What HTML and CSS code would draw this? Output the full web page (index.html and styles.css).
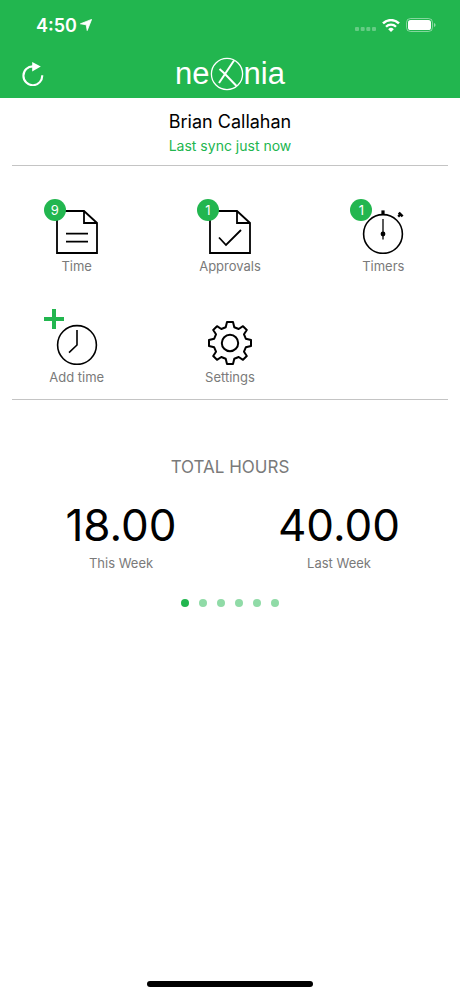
FILE: index.html
```html
<!DOCTYPE html>
<html lang="en">

<head>
    <meta charset="UTF-8">
    <meta name="viewport" content="width=device-width, initial-scale=1.0">
    <title>Nexonia</title>
    <link rel="stylesheet" href="styles.css">
</head>

<body>
    <header class="header">
        <div class="status-bar">
            <div class="status-left">
                <span class="clock">4:50</span>
                <svg class="location" viewBox="0 0 12 12" width="12" height="12">
                    <path d="M11.6 0.4 L7.2 11.6 L6.2 5.8 L0.4 4.8 Z" fill="#fff" stroke="#fff" stroke-width="0.8" stroke-linejoin="round" />
                </svg>
            </div>
            <div class="status-right">
                <svg viewBox="0 0 21 12" width="21" height="12" fill="#fff" opacity="0.3">
                    <rect x="0" y="8" width="4" height="4" rx="1" />
                    <rect x="5.7" y="8" width="4" height="4" rx="1" />
                    <rect x="11.3" y="8" width="4" height="4" rx="1" />
                    <rect x="17" y="8" width="4" height="4" rx="1" />
                </svg>
                <svg class="wifi" viewBox="0 0 18 13" width="18" height="13">
                    <path d="M1 4.4 A11.4 11.4 0 0 1 17 4.4" fill="none" stroke="#fff" stroke-width="2.5" />
                    <path d="M4 7.8 A7 7 0 0 1 14 7.8" fill="none" stroke="#fff" stroke-width="2.3" />
                    <path d="M9 13 L6.2 10.2 A4 4 0 0 1 11.8 10.2 Z" fill="#fff" />
                </svg>
                <svg class="battery" viewBox="0 0 30 14" width="30" height="14">
                    <rect x="0.5" y="0.5" width="26" height="13" rx="4" fill="none" stroke="#fff" stroke-opacity="0.45" />
                    <rect x="2" y="2" width="23" height="10" rx="2.6" fill="#fff" />
                    <path d="M28 5 Q29.6 5.6 29.6 7 Q29.6 8.4 28 9 Z" fill="#fff" fill-opacity="0.5" />
                </svg>
            </div>
        </div>

        <div class="nav-bar">
            <button class="refresh" type="button" aria-label="Refresh">
                <svg viewBox="0 0 22 24" width="22" height="24">
                    <path d="M11 4.4 A9.4 9.4 0 1 0 20.2 13.2" fill="none" stroke="#fff" stroke-width="2.1" />
                    <path d="M10.2 0 L18.8 4.4 L10.2 9.6 Z" fill="#fff" />
                </svg>
            </button>
            <div class="logo">
                <span>ne</span>
                <svg viewBox="0 0 34 34" width="34" height="34" fill="none" stroke="#fff">
                    <circle cx="17" cy="17" r="15.6" stroke-width="1.3" />
                    <path d="M9.5 12 L14.5 16.5 L26.5 29" stroke-width="2" />
                    <path d="M24 3.5 L9 26" stroke-width="2" />
                </svg>
                <span>nia</span>
            </div>
        </div>
    </header>

    <main class="content">
        <section class="user">
            <h1 class="user-name">Brian Callahan</h1>
            <p class="sync">Last sync just now</p>
        </section>

        <nav class="menu">
            <a class="tile" href="#">
                <span class="icon">
                    <svg viewBox="0 0 44 44" width="44" height="44" fill="none" stroke="#000" stroke-width="1.8">
                        <path d="M2 1 H29 L42 13 V43 H2 Z M29 1 V13 H42" />
                        <path d="M11 23.7 H33 M11 31.7 H33" />
                    </svg>
                    <span class="badge">9</span>
                </span>
                <span class="label">Time</span>
            </a>
            <a class="tile" href="#">
                <span class="icon">
                    <svg viewBox="0 0 44 44" width="44" height="44" fill="none" stroke="#000" stroke-width="1.8">
                        <path d="M2 1 H29 L42 13 V43 H2 Z M29 1 V13 H42" />
                        <path d="M11 27.5 L18 35 L33 20" />
                    </svg>
                    <span class="badge">1</span>
                </span>
                <span class="label">Approvals</span>
            </a>
            <a class="tile" href="#">
                <span class="icon">
                    <svg viewBox="0 0 44 44" width="44" height="44">
                        <circle cx="22" cy="24" r="19.4" fill="none" stroke="#000" stroke-width="1.6" />
                        <path d="M22 9 V29.5" stroke="#000" stroke-width="1.3" />
                        <circle cx="22" cy="24" r="2.4" />
                        <rect x="20.4" y="0.4" width="3.2" height="4" />
                        <path d="M37.8 2.6 L41.6 6.4" stroke="#000" stroke-width="2.6" />
                        <path d="M39.6 4.2 L37.2 6.6" stroke="#000" stroke-width="2.4" />
                    </svg>
                    <span class="badge">1</span>
                </span>
                <span class="label">Timers</span>
            </a>
            <a class="tile" href="#">
                <span class="icon">
                    <svg viewBox="0 0 44 44" width="44" height="44" fill="none" stroke="#000" stroke-width="1.6">
                        <circle cx="22" cy="24" r="19.4" />
                        <path d="M22 9 V24 L14 31.6" />
                    </svg>
                    <svg class="plus" viewBox="0 0 20 20" width="20" height="20">
                        <path d="M10 0 V20 M0 10 H20" stroke="#22b64f" stroke-width="4" />
                    </svg>
                </span>
                <span class="label">Add time</span>
            </a>
            <a class="tile" href="#">
                <span class="icon">
                    <svg viewBox="0 0 44 44" width="44" height="44" fill="none" stroke="#000" stroke-width="2">
                        <path stroke-linejoin="round" d="M19 1 H25 L26.3 6.2 L30.7 8 L35 5.2 L38.8 9 L36 13.3 L37.8 17.7 L43 19 V25 L37.8 26.3 L36 30.7 L38.8 35 L35 38.8 L30.7 36 L26.3 37.8 L25 43 H19 L17.7 37.8 L13.3 36 L9 38.8 L5.2 35 L8 30.7 L6.2 26.3 L1 25 V19 L6.2 17.7 L8 13.3 L5.2 9 L9 5.2 L13.3 8 L17.7 6.2 Z" />
                        <circle cx="22" cy="22" r="8.2" />
                    </svg>
                </span>
                <span class="label">Settings</span>
            </a>
        </nav>

        <section class="totals">
            <h2 class="totals-title">Total Hours</h2>
            <div class="stats">
                <div class="stat">
                    <div class="value">18.00</div>
                    <div class="label">This Week</div>
                </div>
                <div class="stat">
                    <div class="value">40.00</div>
                    <div class="label">Last Week</div>
                </div>
            </div>
            <div class="dots">
                <span class="dot active"></span>
                <span class="dot"></span>
                <span class="dot"></span>
                <span class="dot"></span>
                <span class="dot"></span>
                <span class="dot"></span>
            </div>
        </section>
    </main>

    <footer class="footer">
        <div class="home-bar"></div>
    </footer>
</body>

</html>
```
FILE: styles.css
```css
* {
    box-sizing: border-box;
}

body {
    display: flex;
    flex-direction: column;
    min-height: 100vh;
    margin: 0;
    background: #fff;
    color: #000;
    font-family: Inter, "Liberation Sans", sans-serif;
}

svg {
    display: block;
}

/* header */
.header {
    background: #22b64f;
    color: #fff;
}

.status-bar {
    display: flex;
    justify-content: space-between;
    align-items: center;
    height: 50px;
    padding: 0 24px 0 36px;
}

.status-left,
.status-right {
    display: flex;
    align-items: center;
}

.status-left {
    gap: 3px;
}

.status-right {
    gap: 6px;
}

.clock {
    font-size: 18px;
    font-weight: 600;
}

.nav-bar {
    display: grid;
    grid-template-columns: 1fr auto 1fr;
    align-items: center;
    height: 48px;
    padding: 0 22px;
}

.refresh {
    justify-self: start;
    padding: 0;
    border: none;
    background: none;
    cursor: pointer;
}

.logo {
    display: flex;
    align-items: center;
    font-family: "Liberation Sans", Arial, sans-serif;
    font-size: 31px;
    line-height: 40px;
}

/* user */
.user {
    margin: 0 12px;
    padding: 11px 0 8px;
    border-bottom: 1px solid #c4c4c4;
    text-align: center;
}

.user-name {
    margin: 0;
    font-size: 18px;
    font-weight: 400;
    line-height: 26px;
}

.sync {
    margin: 0;
    color: #22b64f;
    font-size: 14px;
    line-height: 22px;
}

/* menu */
.menu {
    display: grid;
    grid-template-columns: repeat(3, 1fr);
    row-gap: 45px;
    padding: 44px 0 12px;
}

.tile {
    display: flex;
    flex-direction: column;
    align-items: center;
    color: inherit;
    text-decoration: none;
}

.icon {
    position: relative;
    margin-bottom: 2px;
}

.badge {
    position: absolute;
    top: -11px;
    left: -11px;
    width: 22px;
    height: 22px;
    border-radius: 50%;
    background: #22b64f;
    color: #fff;
    font-size: 13px;
    line-height: 22px;
    text-align: center;
}

.plus {
    position: absolute;
    top: -12px;
    left: -11px;
}

.label {
    color: #7a7a7a;
    font-size: 13px;
    line-height: 20px;
}

/* totals */
.totals {
    margin: 0 12px;
    padding-top: 55px;
    border-top: 1px solid #c4c4c4;
    text-align: center;
}

.totals-title {
    margin: 0;
    color: #7a7a7a;
    font-size: 17px;
    font-weight: 400;
    line-height: 24px;
    text-transform: uppercase;
}

.stats {
    display: grid;
    grid-template-columns: 1fr 1fr;
    margin-top: 18px;
}

.value {
    font-size: 44px;
    line-height: 56px;
}

.dots {
    display: flex;
    justify-content: center;
    gap: 10px;
    margin-top: 26px;
}

.dot {
    width: 8px;
    height: 8px;
    border-radius: 50%;
    background: #90dba7;
}

.dot.active {
    background: #22b64f;
}

/* home indicator */
.footer {
    margin-top: auto;
    padding-bottom: 9px;
}

.home-bar {
    width: 36%;
    height: 6px;
    margin: 0 auto;
    border-radius: 3px;
    background: #000;
}
```
